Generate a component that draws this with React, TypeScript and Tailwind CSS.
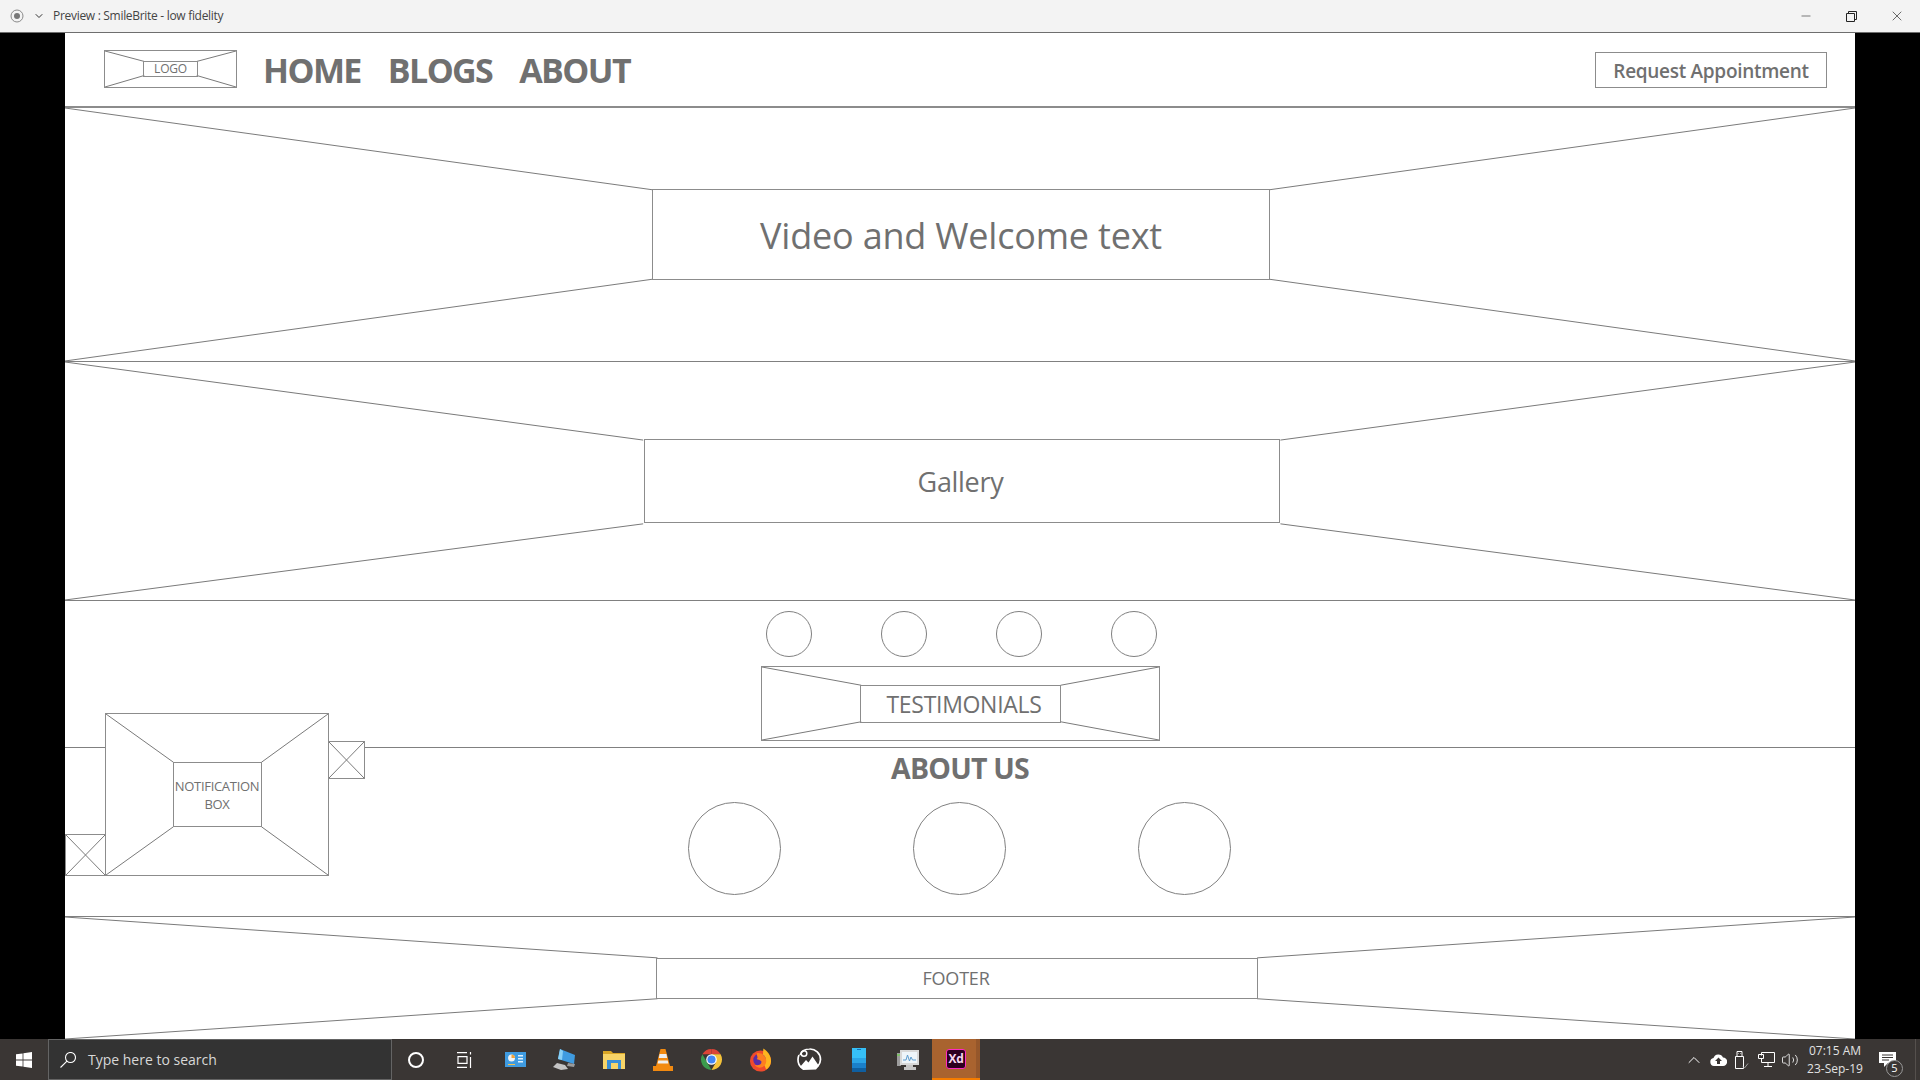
import type { ReactNode } from "react";
import { ChevronDown, Minus, X, ChevronUp, Volume2 } from "lucide-react";

const ui = "font-['Open_Sans',sans-serif]";

// wireframe placeholder: a box with lines running from its corners to the label box in the middle
function Placeholder({
  className,
  inner,
  children,
}: {
  className: string;
  inner: { x1: number; y1: number; x2: number; y2: number };
  children?: ReactNode;
}) {
  const { x1, y1, x2, y2 } = inner;
  return (
    <div className={`relative ${className}`}>
      <svg className="absolute inset-0 h-full w-full" viewBox="0 0 100 100" preserveAspectRatio="none">
        <line x1="0" y1="0" x2={x1} y2={y1} stroke="#7a7a7a" vectorEffect="non-scaling-stroke" />
        <line x1="100" y1="0" x2={x2} y2={y1} stroke="#7a7a7a" vectorEffect="non-scaling-stroke" />
        <line x1="0" y1="100" x2={x1} y2={y2} stroke="#7a7a7a" vectorEffect="non-scaling-stroke" />
        <line x1="100" y1="100" x2={x2} y2={y2} stroke="#7a7a7a" vectorEffect="non-scaling-stroke" />
      </svg>
      {children}
    </div>
  );
}

function CrossBox({ className }: { className: string }) {
  return (
    <div className={`absolute border border-[#8c8c8c] bg-white ${className}`}>
      <svg className="h-full w-full" viewBox="0 0 100 100" preserveAspectRatio="none">
        <line x1="0" y1="0" x2="100" y2="100" stroke="#7a7a7a" vectorEffect="non-scaling-stroke" />
        <line x1="100" y1="0" x2="0" y2="100" stroke="#7a7a7a" vectorEffect="non-scaling-stroke" />
      </svg>
    </div>
  );
}

function Circle({ className }: { className: string }) {
  return <div className={`rounded-full border border-[#808080] ${className}`} />;
}

function AppCell({ children }: { children: ReactNode }) {
  return <div className="flex w-[49px] justify-center">{children}</div>;
}

function TrayCell({ children }: { children: ReactNode }) {
  return <div className="flex w-[24px] justify-center">{children}</div>;
}

function TaskbarIcons() {
  return (
    <>
      <AppCell>
        <svg width="21" height="16" viewBox="0 0 21 16">
          <rect width="21" height="15" fill="#3f9be0" />
          <circle cx="6.5" cy="6" r="3.5" fill="#f2f2f2" />
          <path d="M6.5 6V2.500A3.500 3.500 0 0 1 10 6Z" fill="#f2a33a" />
          <path d="M13 3H18V4.500H13ZM13 6H18V7.500H13ZM13 9H18V10.500H13Z" fill="#dff1fd" />
          <path d="M3 12H10V13H3Z" fill="#f2c14e" />
        </svg>
      </AppCell>
      <AppCell>
        <svg width="23" height="22" viewBox="0 0 23 22">
          <path d="M7 0 22 6 21 15 5 10Z" fill="#3f9be0" />
          <path d="M7 0 10 2 9 11 5 10Z" fill="#8ad0f5" />
          <path d="M4 14 12 16 15 20 8 21 0 18Z" fill="#c4c4c4" />
          <path d="M15 14 22 15 21 18 14 17Z" fill="#9a9a9a" />
        </svg>
      </AppCell>
      <AppCell>
        <svg width="22" height="18" viewBox="0 0 22 18">
          <path d="M0 0H8L10 2H22V5H0Z" fill="#d9a626" />
          <path d="M0 3H22V18H0Z" fill="#f7d467" />
          <path d="M4 9H18V18H15V12H8V18H4Z" fill="#3a8fd6" />
        </svg>
      </AppCell>
      <AppCell>
        <svg width="20" height="22" viewBox="0 0 20 22">
          <path d="M7.500 0H12.500L17 17H3Z" fill="#f28a10" />
          <path d="M6.600 5H13.400L14.200 9H5.800ZM5.300 11.500H14.700L15.400 14.500H4.600Z" fill="#eee" />
          <path d="M0 17H20V22H0Z" fill="#f28a10" />
        </svg>
      </AppCell>
      <AppCell>
        <svg width="23" height="23" viewBox="0 0 48 48">
          <path d="M24 2A22 22 0 0 1 43 13H24Z" fill="#db4437" />
          <path d="M5 13A22 22 0 0 1 24 2V13Z" fill="#db4437" />
          <path d="M5 13 24 46A22 22 0 0 1 5 13Z" fill="#3b9b4d" />
          <path d="M43 13A22 22 0 0 1 24 46L33.500 29.500 24 13Z" fill="#f4c33a" />
          <circle cx="24" cy="24" r="11" fill="#fff" />
          <circle cx="24" cy="24" r="8.500" fill="#4285f4" />
        </svg>
      </AppCell>
      <AppCell>
        <svg width="23" height="24" viewBox="0 0 24 24">
          <circle cx="12" cy="13" r="11" fill="#ef4a2c" />
          <path d="M15 0C20 3 23 8 23 13 23 17 21 20 18 22L14 13Z" fill="#ffb51f" />
          <circle cx="11" cy="12" r="6.500" fill="#5a2ea6" />
          <path d="M8 5C12 4 18 7 18 13 18 17 15 20 11 20 8 20 6.500 18 6 17 9 18 13 17 13 14 13 12 9 12 8 11 10 10 8 7 8 5Z" fill="#ff7f1f" />
        </svg>
      </AppCell>
      <AppCell>
        <svg width="25" height="23" viewBox="0 0 25 23" fill="#fff">
          <path d="M3 7A10.500 10.500 0 0 1 12.500 1 10.500 10.500 0 0 1 23.500 11.500 10.500 10.500 0 0 1 21 18" fill="none" stroke="#fff" strokeWidth="1.700" />
          <path d="M2 7A10.500 10.500 0 0 0 1 11.500 10.500 10.500 0 0 0 5 20" fill="none" stroke="#fff" strokeWidth="1.700" />
          <circle cx="7" cy="5.500" r="2.800" fill="none" stroke="#fff" strokeWidth="1.500" />
          <path d="M3 19 9 12 11.500 14.500 15.500 8.500 22 18 19 21.500 6 22Z" />
        </svg>
      </AppCell>
      <AppCell>
        <div className="flex h-[24px] w-[14px] flex-col">
          <div className="relative h-[10px] bg-[#36c0f7]">
            <div className="absolute left-[5px] top-[1px] h-[1px] w-[4px] bg-[#1273bb]" />
          </div>
          <div className="h-[5px] bg-[#2aa4e6]" />
          <div className="h-[5px] bg-[#1a80ca]" />
          <div className="h-[4px] bg-[#0f5fa0]" />
        </div>
      </AppCell>
      <AppCell>
        <svg width="23" height="22" viewBox="0 0 23 22">
          <rect x="1" y="4" width="4" height="13" fill="#9c9c9c" />
          <rect x="1" y="5" width="3" height="2" fill="#7fbf6a" />
          <rect x="4" y="1" width="19" height="15" fill="#d8d8d8" />
          <rect x="6" y="3" width="15" height="11" fill="#eef5fa" />
          <path d="M7 11H10L11.500 6 13.500 12 15 8 16.500 11H20" fill="none" stroke="#5d9ccf" />
          <path d="M10 16H17V18H20V21H8V18H10Z" fill="#c6c6c6" />
        </svg>
      </AppCell>
      <div className="flex h-full w-[48px] flex-col">
        <div className="flex flex-1">
          <div className="flex flex-1 items-center justify-center bg-[#a9632f] pl-[4px]">
            <div className={`flex h-[20px] w-[20px] items-center justify-center rounded-[3px] border border-[#ff2bc2] bg-[#2e001f] text-[12px] font-bold tracking-[-0.3px] text-[#f7d9ee] ${ui}`}>
              Xd
            </div>
          </div>
          <div className="w-[4px] bg-[#95572b]" />
        </div>
        <div className="h-[2px] bg-[#f57c00]" />
      </div>
    </>
  );
}

function Tray() {
  return (
    <div className="ml-auto flex h-full items-center text-white">
      <TrayCell>
        <ChevronUp size={20} strokeWidth={1.200} />
      </TrayCell>
      <TrayCell>
        <svg width="17" height="12" viewBox="0 0 17 12" fill="#fff">
          <path d="M4 12A4 4 0 0 1 3.500 4.100 5 5 0 0 1 13 3.600 4.200 4.200 0 0 1 13 12Z" />
          <path d="M8.500 3.500 12 7H10V10H7V7H5Z" fill="#3a3634" />
        </svg>
      </TrayCell>
      <TrayCell>
        <svg width="14" height="18" viewBox="0 0 14 18" fill="none" stroke="#fff">
          <path d="M.5 5.500H8.500V17.500H.5ZM2 5.500V.5H7V5.500M3.500 2.500H4M5 2.500H5.500" />
          <path d="M8 15.500 9.500 17 13 12.500" stroke="#a0a0a0" />
        </svg>
      </TrayCell>
      <TrayCell>
        <svg width="17" height="15" viewBox="0 0 17 15" fill="none" stroke="#fff">
          <path d="M3.500 3.500V.5H16.500V10.500H3.500V7M10 10.500V14M6 14.500H14" />
          <path d="M.5 2.500H5.500V6.500H.5Z" />
        </svg>
      </TrayCell>
      <TrayCell>
        <Volume2 size={18} strokeWidth={1.100} />
      </TrayCell>
      <div className={`flex w-[66px] flex-col items-center text-[12px] text-[#e2e2e2] ${ui}`}>
        <span className="leading-[18px]">07:15 AM</span>
        <span className="leading-[18px]">23-Sep-19</span>
      </div>
      <div className="relative h-full w-[47px]">
        <svg width="17" height="16" viewBox="0 0 17 16" className="absolute left-[11px] top-[13px]" fill="#fff">
          <path d="M0 0H17V11H9L5 15V11H0Z" />
          <path d="M3 3H14M3 5.500H14M3 8H10" stroke="#3a3634" />
        </svg>
        <div className={`absolute left-[18px] top-[21px] flex h-[17px] w-[17px] items-center justify-center rounded-full border border-[#999] bg-[#3a3634] text-[11px] text-white ${ui}`}>
          5
        </div>
      </div>
      <div className="h-full w-[1px] bg-[#55504d]" />
      <div className="h-full w-[4px]" />
    </div>
  );
}

export default function App() {
  return (
    <div className={`flex h-[1080px] w-[1920px] flex-col overflow-hidden bg-black ${ui}`}>
      {/* preview window title bar */}
      <div className="flex h-[33px] shrink-0 items-center border-b border-[#6e6e6e] bg-[#f3f3f3] pl-[10px]">
        <svg width="14" height="14" viewBox="0 0 14 14" fill="none">
          <circle cx="7" cy="7" r="6" stroke="#8a8a8a" />
          <circle cx="7" cy="7" r="3" fill="#777" />
        </svg>
        <ChevronDown size={12} className="ml-[9px] text-[#333]" />
        <span className="ml-[8px] text-[12px] tracking-[-0.3px] text-[#444]">Preview : SmileBrite - low fidelity</span>
        <div className="ml-auto flex items-center text-[#222]">
          <Minus size={14} strokeWidth={1} className="mr-[33px]" />
          <svg width="11" height="11" viewBox="0 0 11 11" fill="none" stroke="#222" className="mr-[32px]">
            <path d="M.5 2.500H8.500V10.500H.5ZM2.500 2.500V.5H10.500V8.500H8.500" />
          </svg>
          <X size={16} strokeWidth={1} className="mr-[15px]" />
        </div>
      </div>

      {/* wireframe artboard */}
      <div className="relative mx-[65px] flex h-[1006px] flex-col bg-white text-[#707070]">
        <header className="flex h-[75px] shrink-0 items-center border-b-2 border-[#8c8c8c] pl-[39px] pr-[28px]">
          <Placeholder className="mb-[2px] h-[38px] w-[133px] border border-[#8c8c8c]" inner={{ x1: 30, y1: 29, x2: 70, y2: 68 }}>
            <div className="absolute left-[38px] top-[10px] flex h-[16px] w-[55px] items-center justify-center border border-[#8c8c8c] text-[12px] tracking-[-0.2px]">
              LOGO
            </div>
          </Placeholder>
          <nav className="ml-[26px] mt-[2px] flex items-center gap-[27px] text-[34px] font-bold tracking-[-1.6px]">
            <span>HOME</span>
            <span>BLOGS</span>
            <span>ABOUT</span>
          </nav>
          <button className="ml-auto flex h-[36px] w-[232px] items-center justify-center border border-[#8c8c8c] pt-[3px] text-[19px] font-semibold tracking-[-0.3px]">
            Request Appointment
          </button>
        </header>

        <Placeholder className="flex h-[254px] shrink-0 items-center justify-center border-b border-[#808080]" inner={{ x1: 32.8, y1: 32.3, x2: 67.3, y2: 67.7 }}>
          <div className="relative ml-[2px] flex h-[91px] w-[618px] items-center justify-center border border-[#8c8c8c] pt-[3px] text-[36px] tracking-[-0.2px]">
            Video and Welcome text
          </div>
        </Placeholder>

        <Placeholder className="flex h-[239px] shrink-0 items-center justify-center border-b border-[#808080]" inner={{ x1: 32.3, y1: 32.8, x2: 67.9, y2: 68 }}>
          <div className="relative ml-[4px] flex h-[84px] w-[636px] items-center justify-center border border-[#8c8c8c] pr-[3px] pt-[3px] text-[27px] tracking-[-0.3px]">
            Gallery
          </div>
        </Placeholder>

        <section className="flex h-[147px] shrink-0 flex-col items-center border-b border-[#808080] pt-[10px]">
          <div className="ml-[3px] flex gap-[69px]">
            <Circle className="h-[46px] w-[46px]" />
            <Circle className="h-[46px] w-[46px]" />
            <Circle className="h-[46px] w-[46px]" />
            <Circle className="h-[46px] w-[46px]" />
          </div>
          <Placeholder className="mt-[9px] flex h-[75px] w-[399px] items-center justify-center border border-[#8c8c8c]" inner={{ x1: 25, y1: 25, x2: 75.2, y2: 75 }}>
            <div className="relative flex h-[38px] w-[201px] items-center justify-center border border-[#8c8c8c] pl-[8px] pt-[2px] text-[23px] tracking-[-0.3px]">
              TESTIMONIALS
            </div>
          </Placeholder>
        </section>

        <section className="flex h-[169px] shrink-0 flex-col items-center border-b border-[#808080]">
          <h2 className="mt-[1px] text-[28.500px] font-bold leading-[38px] tracking-[-0.8px]">ABOUT US</h2>
          <div className="mr-[2px] mt-[15px] flex gap-[132px]">
            <Circle className="h-[93px] w-[93px]" />
            <Circle className="h-[93px] w-[93px]" />
            <Circle className="h-[93px] w-[93px]" />
          </div>
        </section>

        <Placeholder className="flex flex-1 items-center" inner={{ x1: 33.1, y1: 33.5, x2: 66.6, y2: 67 }}>
          <div className="relative ml-[591px] flex h-[41px] w-[602px] items-center justify-center border border-[#8c8c8c] pr-[2px] text-[18px] tracking-[-0.2px]">
            FOOTER
          </div>
        </Placeholder>

        {/* notification box sits over the testimonials / about boundary */}
        <Placeholder className="!absolute left-[40px] top-[680px] flex h-[163px] w-[224px] items-center justify-center border border-[#8c8c8c] bg-white" inner={{ x1: 30.4, y1: 30, x2: 70, y2: 70 }}>
          <div className="relative flex h-[65px] w-[89px] items-center justify-center border border-[#8c8c8c] text-center text-[13px] leading-[18px] tracking-[-0.3px]">
            NOTIFICATION BOX
          </div>
        </Placeholder>
        <CrossBox className="left-[263px] top-[708px] h-[38px] w-[37px]" />
        <CrossBox className="left-0 top-[801px] h-[42px] w-[41px]" />
      </div>

      {/* windows taskbar */}
      <div className="flex h-[41px] shrink-0 items-center bg-[#3a3634]">
        <div className="flex w-[48px] justify-center">
          <svg width="16" height="16" viewBox="0 0 16 16" fill="#fff">
            <path d="M0 2.300 6.600 1.400V7.500H0ZM7.400 1.300 16 0V7.500H7.400ZM0 8.400H6.600V14.600L0 13.700ZM7.400 8.400H16V16L7.400 14.700Z" />
          </svg>
        </div>
        <div className="flex h-full w-[344px] items-center border border-[#646464] bg-[#333] pl-[11px]">
          <svg width="16" height="16" viewBox="0 0 16 16" fill="none" stroke="#fff" strokeWidth="1.100">
            <circle cx="10.500" cy="5.500" r="5" />
            <path d="M7 9.200.5 15.500" />
          </svg>
          <span className="ml-[12px] text-[14px] text-[#d8d8d8]">Type here to search</span>
        </div>
        <div className="flex w-[48px] justify-center">
          <div className="h-[16px] w-[16px] rounded-full border-2 border-white" />
        </div>
        <div className="flex w-[48px] justify-center">
          <svg width="17" height="16" viewBox="0 0 17 16" fill="none" stroke="#fff" strokeWidth="1.200">
            <path d="M1 .6H11M1 15.400H11M2 4.600H11V11.400H2ZM14.500 0V2.500M14.500 5V16" />
          </svg>
        </div>
        <div className="w-[3px]" />
        <TaskbarIcons />
        <Tray />
      </div>
    </div>
  );
}
